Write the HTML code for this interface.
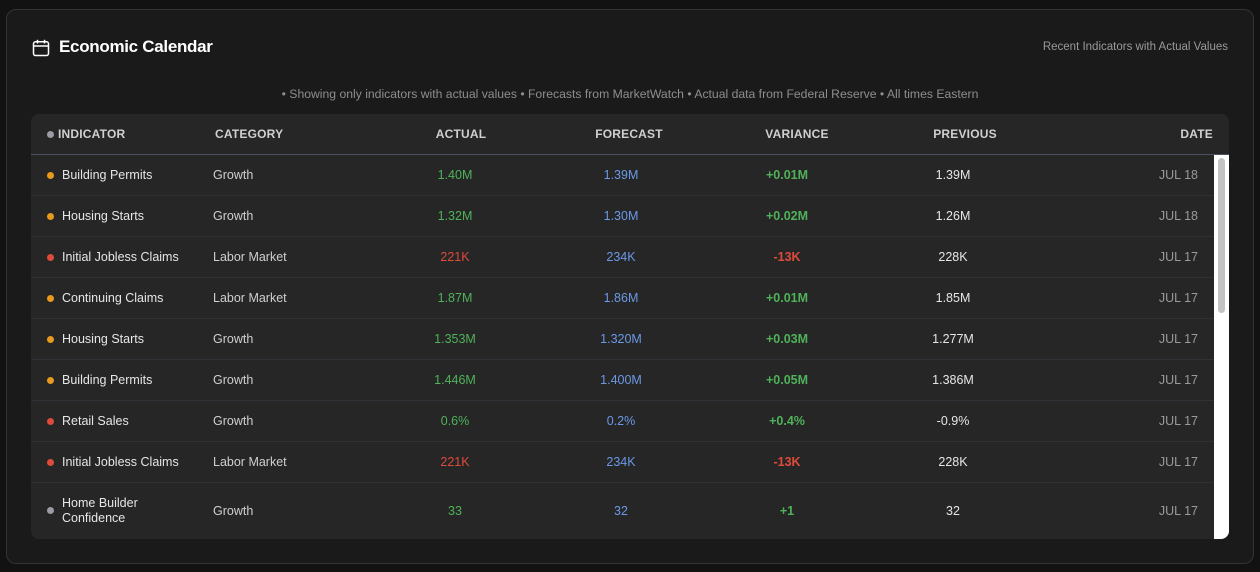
<!DOCTYPE html>
<html><head><meta charset="utf-8"><style>
*{box-sizing:border-box;margin:0;padding:0}
body{width:1260px;height:572px;background:#121212;font-family:"Liberation Sans",sans-serif;position:relative;overflow:hidden}
.card{position:absolute;left:6px;top:9px;width:1248px;height:555px;background:#1a1a1a;border:1px solid #343434;border-radius:10px}
.title{position:absolute;left:59px;top:37px;color:#fff;font-size:17px;font-weight:bold;letter-spacing:-0.3px}
.cal{position:absolute;left:32px;top:39px}
.sub{position:absolute;right:32px;top:41px;color:#9a9a9a;font-size:11.5px}
.note{position:absolute;left:0;width:1260px;top:87px;text-align:center;color:#8e8e8e;font-size:12.2px}
.tbl{position:absolute;left:31px;top:114px;width:1198px;height:425px;background:#262626;border-radius:8px;overflow:hidden}
.row{display:flex;align-items:center}
.row>div{flex:none;text-align:center}
.head{height:41px;border-bottom:1px solid #4a5262}
.head>div{width:168px;color:#d0d0d0;font-size:12px;font-weight:bold;letter-spacing:0.2px}
.head>div:nth-child(2){width:178px}
.head>div:last-child{width:180px}
.br{height:41px;border-bottom:1px solid #303036;width:1183px;font-size:12.5px;color:#e6e6e6}
.br>div{width:166px}
.br>div:nth-child(2){width:175px}
.br>div:last-child{width:178px}
.l{text-align:left!important;padding-left:16px;display:flex;align-items:center}
.r{text-align:right!important;padding-right:16px}
.dot{display:inline-block;flex:none;width:7px;height:7px;border-radius:50%;margin-right:8px}
.o{background:#e89a1e}.rd{background:#dd4b3c}.g{background:#9a9ca3}
.gr{color:#4fb25a}.bl{color:#6b98e6}.re{color:#de4b3b}
.b{font-weight:bold}
.cat{color:#cfcfcf;padding-left:16px;text-align:left!important}
.date{color:#9a9a9a}
.sb{position:absolute;left:1183px;top:41px;width:15px;height:384px;background:#fff}
.th{position:absolute;left:4px;top:3px;width:7px;height:155px;background:#c3c3c3;border-radius:4px}
</style></head><body>
<div class="card"></div>
<svg class="cal" width="18" height="18" viewBox="0 0 18 18" fill="none" stroke="#fff" stroke-width="1.5"><rect x="1.5" y="2.8" width="15" height="13.7" rx="2"/><line x1="1.5" y1="7" x2="16.5" y2="7"/><line x1="5.5" y1="0.8" x2="5.5" y2="4.5"/><line x1="12.5" y1="0.8" x2="12.5" y2="4.5"/></svg>
<div class="title">Economic Calendar</div>
<div class="sub">Recent Indicators with Actual Values</div>
<div class="note">• Showing only indicators with actual values • Forecasts from MarketWatch • Actual data from Federal Reserve • All times Eastern</div>
<div class="tbl">
<div class="row head"><div class="l"><span class="dot g" style="margin-right:4px"></span>INDICATOR</div><div class="l">CATEGORY</div><div>ACTUAL</div><div>FORECAST</div><div>VARIANCE</div><div>PREVIOUS</div><div class="r">DATE</div></div>
<div class="row br"><div class="l"><span class="dot o"></span>Building Permits</div><div class="cat">Growth</div><div class="gr">1.40M</div><div class="bl">1.39M</div><div class="gr b">+0.01M</div><div>1.39M</div><div class="r date">JUL 18</div></div>
<div class="row br"><div class="l"><span class="dot o"></span>Housing Starts</div><div class="cat">Growth</div><div class="gr">1.32M</div><div class="bl">1.30M</div><div class="gr b">+0.02M</div><div>1.26M</div><div class="r date">JUL 18</div></div>
<div class="row br"><div class="l"><span class="dot rd"></span>Initial Jobless Claims</div><div class="cat">Labor Market</div><div class="re">221K</div><div class="bl">234K</div><div class="re b">-13K</div><div>228K</div><div class="r date">JUL 17</div></div>
<div class="row br"><div class="l"><span class="dot o"></span>Continuing Claims</div><div class="cat">Labor Market</div><div class="gr">1.87M</div><div class="bl">1.86M</div><div class="gr b">+0.01M</div><div>1.85M</div><div class="r date">JUL 17</div></div>
<div class="row br"><div class="l"><span class="dot o"></span>Housing Starts</div><div class="cat">Growth</div><div class="gr">1.353M</div><div class="bl">1.320M</div><div class="gr b">+0.03M</div><div>1.277M</div><div class="r date">JUL 17</div></div>
<div class="row br"><div class="l"><span class="dot o"></span>Building Permits</div><div class="cat">Growth</div><div class="gr">1.446M</div><div class="bl">1.400M</div><div class="gr b">+0.05M</div><div>1.386M</div><div class="r date">JUL 17</div></div>
<div class="row br"><div class="l"><span class="dot rd"></span>Retail Sales</div><div class="cat">Growth</div><div class="gr">0.6%</div><div class="bl">0.2%</div><div class="gr b">+0.4%</div><div>-0.9%</div><div class="r date">JUL 17</div></div>
<div class="row br"><div class="l"><span class="dot rd"></span>Initial Jobless Claims</div><div class="cat">Labor Market</div><div class="re">221K</div><div class="bl">234K</div><div class="re b">-13K</div><div>228K</div><div class="r date">JUL 17</div></div>
<div class="row br" style="height:55px;border-bottom:none"><div class="l"><span class="dot g"></span><div style="line-height:15px">Home Builder<br>Confidence</div></div><div class="cat">Growth</div><div class="gr">33</div><div class="bl">32</div><div class="gr b">+1</div><div>32</div><div class="r date">JUL 17</div></div>
<div class="sb"><div class="th"></div></div>
</div>
</body></html>
